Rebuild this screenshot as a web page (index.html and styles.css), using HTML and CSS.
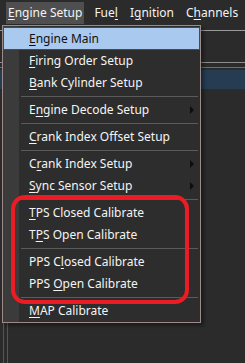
FILE: index.html
```html
<!DOCTYPE html>
<html lang="en">
<head>
  <meta charset="UTF-8">
  <meta name="viewport" content="width=device-width, initial-scale=1.0">
  <title>Engine Setup menu</title>
  <link rel="stylesheet" href="styles.css">
</head>
<body>
  <div class="menubar">
    <div class="top_item active"><u>E</u>ngine Setup</div>
    <div class="top_item">Fue<u>l</u></div>
    <div class="top_item">I<u>g</u>nition</div>
    <div class="top_item">C<u>h</u>annels</div>
  </div>

  <div class="workspace">
    <div class="panel_top"></div>
    <div class="tab_lines"></div>
    <div class="blue_row"></div>
    <div class="panel_body"></div>
  </div>

  <div class="dropdown">
    <div class="item selected"><u>E</u>ngine Main</div>
    <div class="item"><u>F</u>iring Order Setup</div>
    <div class="item"><u>B</u>ank Cylinder Setup</div>
    <div class="sep"></div>
    <div class="item sub">E<u>n</u>gine Decode Setup</div>
    <div class="sep"></div>
    <div class="item"><u>C</u>rank Index Offset Setup</div>
    <div class="sep"></div>
    <div class="item sub">C<u>r</u>ank Index Setup</div>
    <div class="item sub"><u>S</u>ync Sensor Setup</div>
    <div class="sep"></div>
    <div class="item"><u>T</u>PS Closed Calibrate</div>
    <div class="item">T<u>P</u>S Open Calibrate</div>
    <div class="sep"></div>
    <div class="item">PPS C<u>l</u>osed Calibrate</div>
    <div class="item">PPS <u>O</u>pen Calibrate</div>
    <div class="sep"></div>
    <div class="item"><u>M</u>AP Calibrate</div>
  </div>

  <div class="marker"></div>
</body>
</html>
```

FILE: styles.css
```css
* {
  box-sizing: border-box;
}

body {
  margin: 0;
  width: 245px;
  height: 363px;
  overflow: hidden;
  background: #2b2b2b;
  color: #f4f4f4;
  font-family: "Noto Sans", "Open Sans", sans-serif;
  font-size: 12px;
}

u {
  text-decoration-thickness: 1px;
  text-underline-offset: 2px;
}

.menubar {
  display: flex;
  gap: 8px;
  height: 25px;
  padding: 2px 0 1px 6px;
  white-space: nowrap;
}

.top_item {
  padding: 0 2px;
  line-height: 22px;
}

.top_item.active {
  background: #4f4f4f;
}

.workspace {
  display: flex;
  flex-direction: column;
  height: 338px;
}

.panel_top {
  margin-top: 5px;
  height: 32px;
  border-top: 1px solid #9a9a9a;
}

.tab_lines {
  height: 6px;
  border-top: 1px solid #8c8c8c;
  border-bottom: 1px solid #6e6e6e;
}

.blue_row {
  margin-top: 2px;
  height: 19px;
  background: #263c53;
}

.panel_body {
  flex: 1;
  margin-left: 3px;
  border-left: 1px solid #555555;
  position: relative;
}

.panel_body::after {
  content: "";
  position: absolute;
  left: 3px;
  top: 0;
  bottom: 0;
  border-left: 1px solid #555555;
}

.dropdown {
  position: absolute;
  left: 2px;
  top: 25px;
  width: 199px;
  padding: 1px 0 0;
  border: 1px solid #9b8b8b;
  background: linear-gradient(to right, #3b3b3b 16px, #2d2d2d 16px);
  box-shadow: 3px 3px 3px rgba(0, 0, 0, 0.35);
}

.item {
  position: relative;
  height: 22px;
  line-height: 22px;
  padding-left: 26px;
  white-space: nowrap;
}

.item.selected {
  background: #a9c9ef;
  border: 1px solid #3d4b6b;
  color: #101010;
  padding-left: 25px;
  line-height: 21px;
  height: 23px;
}

.item.sub::after {
  content: "";
  position: absolute;
  left: 187px;
  top: 7px;
  border-left: 4px solid #0d0d0d;
  border-top: 4px solid transparent;
  border-bottom: 4px solid transparent;
}

.sep {
  height: 5px;
  margin-left: 18px;
  margin-right: 2px;
  position: relative;
}

.sep::after {
  content: "";
  position: absolute;
  left: 0;
  right: 0;
  top: 2px;
  border-top: 1px solid #5a5a5a;
}

.marker {
  position: absolute;
  left: 11px;
  top: 195px;
  width: 178px;
  height: 109px;
  border: 4px solid #ec1c24;
  border-radius: 14px;
}
```
